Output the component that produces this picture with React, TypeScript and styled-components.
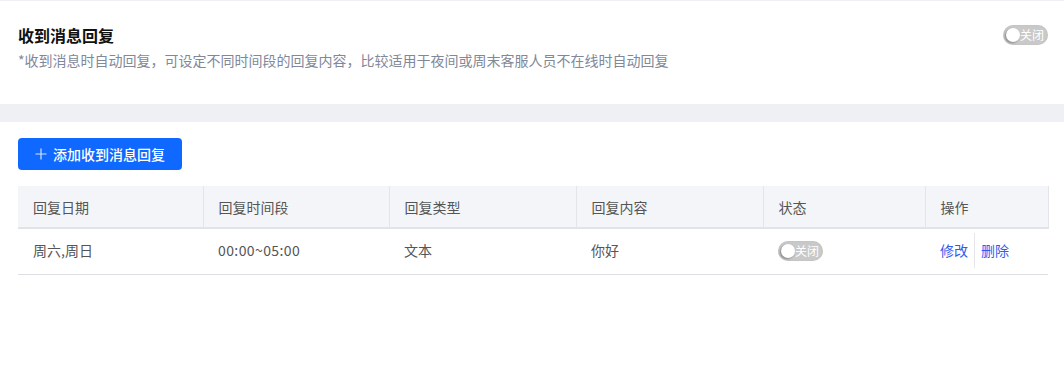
import { FC } from 'react'
import styled, { createGlobalStyle } from 'styled-components'

const GlobalStyle = createGlobalStyle`
  html, body {
    margin: 0;
    padding: 0;
    background: #fff;
    font-family: "Noto Sans CJK SC", "Noto Sans", sans-serif;
  }
  * {
    box-sizing: border-box;
  }
`

interface ReplyRule {
  days: string
  period: string
  type: string
  content: string
  enabled: boolean
}

const rules: ReplyRule[] = [
  { days: '周六,周日', period: '00:00~05:00', type: '文本', content: '你好', enabled: false }
]

const columns = [
  { title: '回复日期', width: 185 },
  { title: '回复时间段', width: 186 },
  { title: '回复类型', width: 187 },
  { title: '回复内容', width: 187 },
  { title: '状态', width: 162 },
  { title: '操作', width: 123 }
]

const Switch: FC<{ checked: boolean }> = ({ checked }) => (
  <SwitchTrack $checked={checked}>
    <SwitchKnob $checked={checked} />
    <SwitchLabel>{checked ? '开启' : '关闭'}</SwitchLabel>
  </SwitchTrack>
)

const App: FC = () => {
  return (
    <Page>
      <GlobalStyle />
      <TopLine />
      <SettingHeader>
        <HeaderText>
          <Title>收到消息回复</Title>
          <Desc>*收到消息时自动回复，可设定不同时间段的回复内容，比较适用于夜间或周末客服人员不在线时自动回复</Desc>
        </HeaderText>
        <Switch checked={false} />
      </SettingHeader>
      <Divider />
      <Body>
        <AddButton>
          <PlusIcon viewBox="0 0 12 12">
            <path d="M6 0.5v11M0.5 6h11" stroke="currentColor" strokeWidth="1.2" fill="none" />
          </PlusIcon>
          添加收到消息回复
        </AddButton>
        <Table>
          <colgroup>
            {columns.map((c) => (
              <col key={c.title} style={{ width: c.width }} />
            ))}
          </colgroup>
          <thead>
            <tr>
              {columns.map((c) => (
                <Th key={c.title}>{c.title}</Th>
              ))}
            </tr>
          </thead>
          <tbody>
            {rules.map((r, i) => (
              <tr key={i}>
                <Td>{r.days}</Td>
                <Td $wide>{r.period}</Td>
                <Td>{r.type}</Td>
                <Td>{r.content}</Td>
                <Td>
                  <Switch checked={r.enabled} />
                </Td>
                <Td>
                  <Actions>
                    <ActionLink>修改</ActionLink>
                    <ActionSep />
                    <ActionLink>删除</ActionLink>
                  </Actions>
                </Td>
              </tr>
            ))}
          </tbody>
        </Table>
      </Body>
    </Page>
  )
}

const Page = styled.div`
  width: 1064px;
  min-height: 370px;
  background: #fff;
`

const TopLine = styled.div`
  height: 1px;
  background: #eff0f4;
`

const SettingHeader = styled.div`
  display: flex;
  align-items: flex-start;
  justify-content: space-between;
  padding: 23px 16px 0 18px;
  height: 103px;
`

const HeaderText = styled.div`
  display: flex;
  flex-direction: column;
`

const Title = styled.div`
  font-size: 16px;
  font-weight: 700;
  color: #111;
  line-height: 22px;
`

const Desc = styled.div`
  margin-top: 4px;
  font-size: 14px;
  color: #808899;
  line-height: 20px;
`

const SwitchTrack = styled.div<{ $checked: boolean }>`
  position: relative;
  display: inline-flex;
  align-items: center;
  width: 45px;
  height: 20px;
  margin-top: 1px;
  border-radius: 10px;
  background: ${(p) => (p.$checked ? '#1068ff' : '#c9c9c9')};
  box-shadow: inset 0 0 2px rgba(0, 0, 0, 0.08);
`

const SwitchKnob = styled.span<{ $checked: boolean }>`
  position: absolute;
  top: 3px;
  left: ${(p) => (p.$checked ? '28px' : '3px')};
  width: 14px;
  height: 14px;
  border-radius: 50%;
  background: #fff;
  box-shadow: -1px 1px 2px rgba(0, 0, 0, 0.35);
`

const SwitchLabel = styled.span`
  margin-left: 17px;
  font-size: 12px;
  line-height: 20px;
  color: #fff;
`

const Divider = styled.div`
  height: 18px;
  background: #eff0f4;
`

const Body = styled.div`
  padding: 16px 16px 0 18px;
`

const AddButton = styled.button`
  display: inline-flex;
  align-items: center;
  gap: 6px;
  height: 32px;
  width: 164px;
  padding: 0 0 0 17px;
  border: none;
  border-radius: 4px;
  background: #0f68ff;
  color: #fff;
  font-family: inherit;
  font-size: 14px;
  font-weight: 500;
  cursor: pointer;
`

const PlusIcon = styled.svg`
  width: 12px;
  height: 12px;
  color: #d6e4ff;
`

const Table = styled.table`
  margin-top: 16px;
  width: 1030px;
  border-collapse: collapse;
  table-layout: fixed;
`

const Th = styled.th`
  height: 42px;
  padding: 0 15px;
  text-align: left;
  font-size: 14px;
  font-weight: 400;
  color: #555;
  background: #f4f5f9;
  border-right: 1px solid #e4e5ea;
  border-bottom: 2px solid #e2e3e7;
`

const Td = styled.td<{ $wide?: boolean }>`
  height: 46px;
  padding: 0 15px 2px 15px;
  font-size: 14px;
  letter-spacing: ${(p) => (p.$wide ? '0.4px' : '0')};
  color: #555;
  border-bottom: 1px solid #dedfe3;
  vertical-align: middle;
`

const Actions = styled.div`
  display: flex;
  align-items: center;
  gap: 6px;
`

const ActionLink = styled.a`
  font-size: 14px;
  color: #2f5cf0;
  cursor: pointer;
`

const ActionSep = styled.span`
  width: 1px;
  height: 35px;
  background: #e6e6ea;
`

export default App
